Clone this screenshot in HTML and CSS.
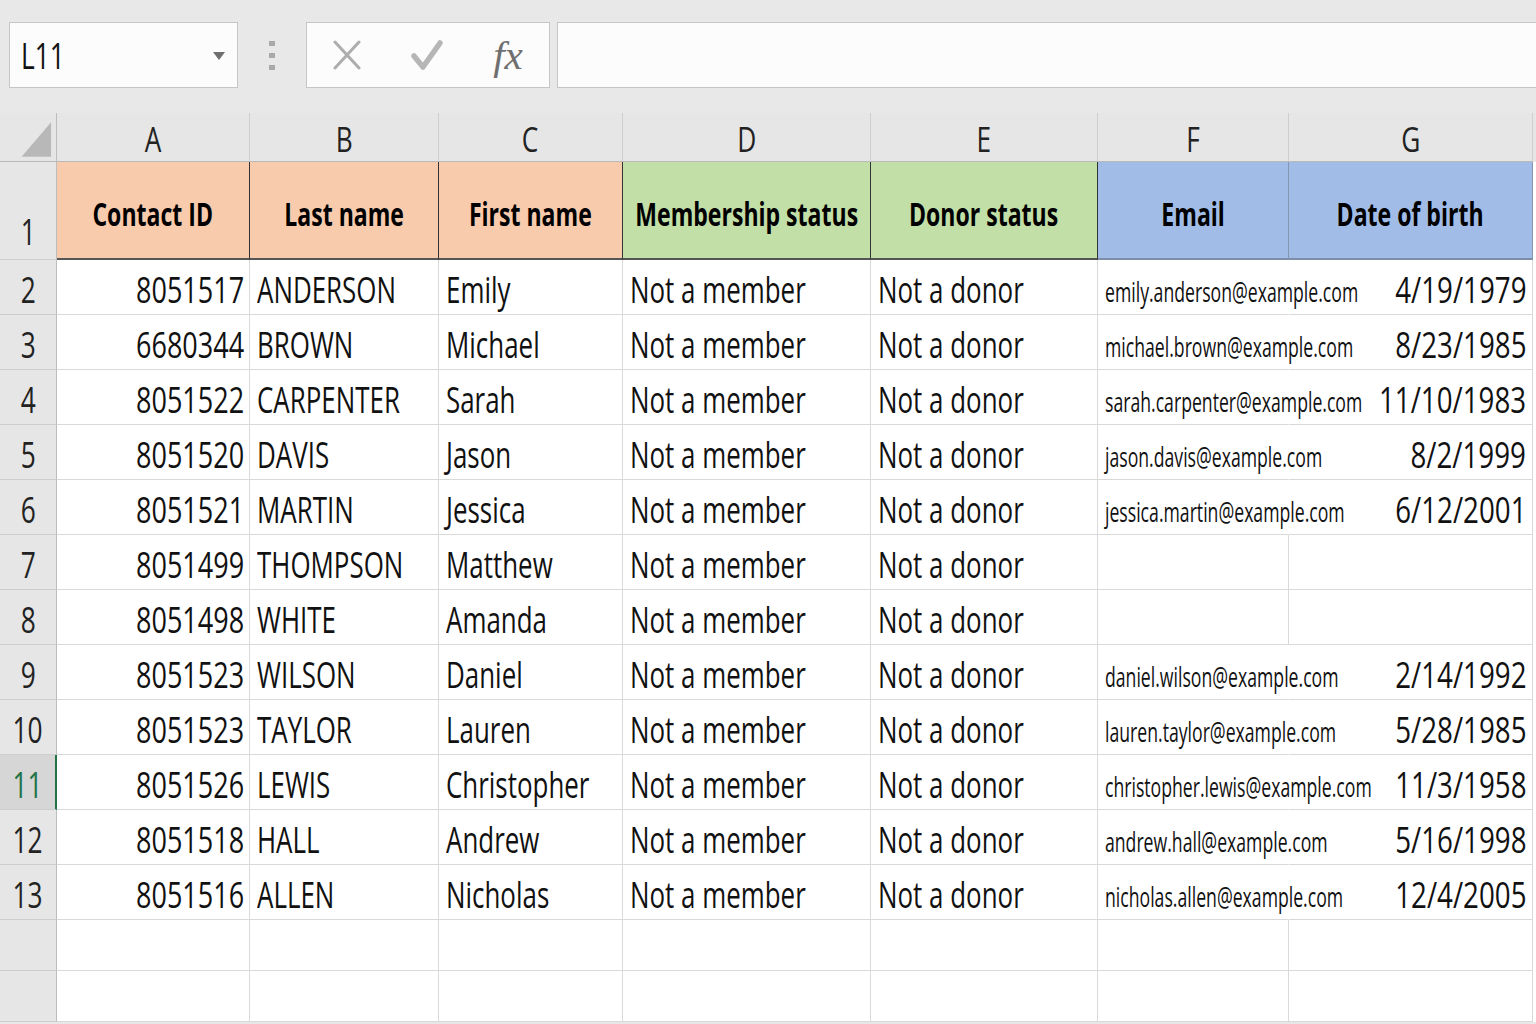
FILE: index.html
```html
<!DOCTYPE html>
<html>
<head>
    <meta charset="UTF-8">
    <title>Contacts</title>
    <link rel="stylesheet" href="styles.css">
</head>
<body>
<!-- formula bar -->
<div class="toolbar">
    <div class="namebox">
        <span class="t">L11</span>
        <span class="caret"></span>
    </div>
    <div class="grip"><i></i><i></i><i></i></div>
    <div class="fbuttons">
        <svg width="28" height="30" viewBox="0 0 28 30">
            <path d="M2 2 L26 28 M26 2 L2 28" stroke="#adadad" stroke-width="3" stroke-linecap="round" fill="none"/>
        </svg>
        <svg width="32" height="32" viewBox="0 0 32 32">
            <path d="M3 17 L12 28 L29 4" stroke="#b6b6b6" stroke-width="5.5" stroke-linecap="round" stroke-linejoin="round" fill="none"/>
        </svg>
        <span class="fx">fx</span>
    </div>
    <div class="formula"></div>
</div>

<!-- sheet -->
<div class="sheet">
    <div class="cell corner">
        <svg width="57" height="49" viewBox="0 0 57 49"><polygon points="22,44 52,44 52,9" fill="#b8b8b8"/></svg>
    </div>
    <div class="cell ch"><span class="t">A</span></div>
    <div class="cell ch"><span class="t">B</span></div>
    <div class="cell ch"><span class="t">C</span></div>
    <div class="cell ch"><span class="t">D</span></div>
    <div class="cell ch"><span class="t">E</span></div>
    <div class="cell ch"><span class="t">F</span></div>
    <div class="cell ch"><span class="t">G</span></div>

    <div class="cell rh first"><span class="t">1</span></div>
    <div class="cell hd o"><span class="t">Contact ID</span></div>
    <div class="cell hd o"><span class="t">Last name</span></div>
    <div class="cell hd o"><span class="t">First name</span></div>
    <div class="cell hd g"><span class="t">Membership status</span></div>
    <div class="cell hd g"><span class="t">Donor status</span></div>
    <div class="cell hd b"><span class="t">Email</span></div>
    <div class="cell hd b"><span class="t">Date of birth</span></div>

    <div class="cell rh"><span class="t">2</span></div>
    <div class="cell r num"><span class="t">8051517</span></div>
    <div class="cell l"><span class="t">ANDERSON</span></div>
    <div class="cell l"><span class="t">Emily</span></div>
    <div class="cell l"><span class="t">Not a member</span></div>
    <div class="cell l"><span class="t">Not a donor</span></div>
    <div class="cell l email nob"><span class="t">emily.anderson@example.com</span></div>
    <div class="cell r date"><span class="t">4/19/1979</span></div>

    <div class="cell rh"><span class="t">3</span></div>
    <div class="cell r num"><span class="t">6680344</span></div>
    <div class="cell l"><span class="t">BROWN</span></div>
    <div class="cell l"><span class="t">Michael</span></div>
    <div class="cell l"><span class="t">Not a member</span></div>
    <div class="cell l"><span class="t">Not a donor</span></div>
    <div class="cell l email nob"><span class="t">michael.brown@example.com</span></div>
    <div class="cell r date"><span class="t">8/23/1985</span></div>

    <div class="cell rh"><span class="t">4</span></div>
    <div class="cell r num"><span class="t">8051522</span></div>
    <div class="cell l"><span class="t">CARPENTER</span></div>
    <div class="cell l"><span class="t">Sarah</span></div>
    <div class="cell l"><span class="t">Not a member</span></div>
    <div class="cell l"><span class="t">Not a donor</span></div>
    <div class="cell l email nob"><span class="t">sarah.carpenter@example.com</span></div>
    <div class="cell r date"><span class="t">11/10/1983</span></div>

    <div class="cell rh"><span class="t">5</span></div>
    <div class="cell r num"><span class="t">8051520</span></div>
    <div class="cell l"><span class="t">DAVIS</span></div>
    <div class="cell l"><span class="t">Jason</span></div>
    <div class="cell l"><span class="t">Not a member</span></div>
    <div class="cell l"><span class="t">Not a donor</span></div>
    <div class="cell l email nob"><span class="t">jason.davis@example.com</span></div>
    <div class="cell r date"><span class="t">8/2/1999</span></div>

    <div class="cell rh"><span class="t">6</span></div>
    <div class="cell r num"><span class="t">8051521</span></div>
    <div class="cell l"><span class="t">MARTIN</span></div>
    <div class="cell l"><span class="t">Jessica</span></div>
    <div class="cell l"><span class="t">Not a member</span></div>
    <div class="cell l"><span class="t">Not a donor</span></div>
    <div class="cell l email nob"><span class="t">jessica.martin@example.com</span></div>
    <div class="cell r date"><span class="t">6/12/2001</span></div>

    <div class="cell rh"><span class="t">7</span></div>
    <div class="cell r num"><span class="t">8051499</span></div>
    <div class="cell l"><span class="t">THOMPSON</span></div>
    <div class="cell l"><span class="t">Matthew</span></div>
    <div class="cell l"><span class="t">Not a member</span></div>
    <div class="cell l"><span class="t">Not a donor</span></div>
    <div class="cell"></div>
    <div class="cell"></div>

    <div class="cell rh"><span class="t">8</span></div>
    <div class="cell r num"><span class="t">8051498</span></div>
    <div class="cell l"><span class="t">WHITE</span></div>
    <div class="cell l"><span class="t">Amanda</span></div>
    <div class="cell l"><span class="t">Not a member</span></div>
    <div class="cell l"><span class="t">Not a donor</span></div>
    <div class="cell"></div>
    <div class="cell"></div>

    <div class="cell rh"><span class="t">9</span></div>
    <div class="cell r num"><span class="t">8051523</span></div>
    <div class="cell l"><span class="t">WILSON</span></div>
    <div class="cell l"><span class="t">Daniel</span></div>
    <div class="cell l"><span class="t">Not a member</span></div>
    <div class="cell l"><span class="t">Not a donor</span></div>
    <div class="cell l email nob"><span class="t">daniel.wilson@example.com</span></div>
    <div class="cell r date"><span class="t">2/14/1992</span></div>

    <div class="cell rh"><span class="t">10</span></div>
    <div class="cell r num"><span class="t">8051523</span></div>
    <div class="cell l"><span class="t">TAYLOR</span></div>
    <div class="cell l"><span class="t">Lauren</span></div>
    <div class="cell l"><span class="t">Not a member</span></div>
    <div class="cell l"><span class="t">Not a donor</span></div>
    <div class="cell l email nob"><span class="t">lauren.taylor@example.com</span></div>
    <div class="cell r date"><span class="t">5/28/1985</span></div>

    <div class="cell rh sel"><span class="t">11</span></div>
    <div class="cell r num"><span class="t">8051526</span></div>
    <div class="cell l"><span class="t">LEWIS</span></div>
    <div class="cell l"><span class="t">Christopher</span></div>
    <div class="cell l"><span class="t">Not a member</span></div>
    <div class="cell l"><span class="t">Not a donor</span></div>
    <div class="cell l email nob"><span class="t">christopher.lewis@example.com</span></div>
    <div class="cell r date"><span class="t">11/3/1958</span></div>

    <div class="cell rh"><span class="t">12</span></div>
    <div class="cell r num"><span class="t">8051518</span></div>
    <div class="cell l"><span class="t">HALL</span></div>
    <div class="cell l"><span class="t">Andrew</span></div>
    <div class="cell l"><span class="t">Not a member</span></div>
    <div class="cell l"><span class="t">Not a donor</span></div>
    <div class="cell l email nob"><span class="t">andrew.hall@example.com</span></div>
    <div class="cell r date"><span class="t">5/16/1998</span></div>

    <div class="cell rh"><span class="t">13</span></div>
    <div class="cell r num"><span class="t">8051516</span></div>
    <div class="cell l"><span class="t">ALLEN</span></div>
    <div class="cell l"><span class="t">Nicholas</span></div>
    <div class="cell l"><span class="t">Not a member</span></div>
    <div class="cell l"><span class="t">Not a donor</span></div>
    <div class="cell l email nob"><span class="t">nicholas.allen@example.com</span></div>
    <div class="cell r date"><span class="t">12/4/2005</span></div>

    <div class="cell rh"></div>
    <div class="cell"></div>
    <div class="cell"></div>
    <div class="cell"></div>
    <div class="cell"></div>
    <div class="cell"></div>
    <div class="cell"></div>
    <div class="cell"></div>

    <div class="cell rh"></div>
    <div class="cell"></div>
    <div class="cell"></div>
    <div class="cell"></div>
    <div class="cell"></div>
    <div class="cell"></div>
    <div class="cell"></div>
    <div class="cell"></div>
</div>
</body>
</html>
```

FILE: styles.css
```css
/* page */
body {
    margin: 0;
    background: #e8e8e8;
    font-family: "Open Sans", "Noto Sans", sans-serif;
    color: #111;
    overflow: hidden;
}

/* narrow text, the sheet font is condensed */
.t {
    display: inline-block;
    flex: none;
    line-height: 1;
    transform: scaleX(0.72);
    transform-origin: left center;
}

/* formula bar */
.toolbar {
    height: 113px;
    box-sizing: border-box;
    padding: 22px 0 0 9px;
    display: flex;
    align-items: flex-start;
}
.namebox {
    width: 229px;
    height: 66px;
    box-sizing: border-box;
    background: #fcfcfc;
    border: 1px solid #c6c6c6;
    display: flex;
    align-items: center;
    padding-left: 11px;
    padding-top: 2px;
}
.namebox .t {
    font-size: 36px;
    transform: scaleX(0.73);
}
.caret {
    margin-left: auto;
    margin-right: 12px;
    width: 0;
    height: 0;
    border-left: 6.5px solid transparent;
    border-right: 6.5px solid transparent;
    border-top: 8px solid #6e6e6e;
}
.grip {
    width: 68px;
    height: 66px;
    display: flex;
    flex-direction: column;
    align-items: center;
    justify-content: center;
    gap: 7px;
}
.grip i {
    width: 6px;
    height: 5px;
    background: #a9a9a9;
}
.fbuttons {
    width: 244px;
    height: 66px;
    box-sizing: border-box;
    background: #fcfcfc;
    border: 1px solid #c6c6c6;
    display: grid;
    grid-template-columns: 80px 80px 82px;
    align-items: center;
    justify-items: center;
}
.fx {
    font-family: "Liberation Serif", "DejaVu Serif", serif;
    font-style: italic;
    font-size: 41px;
    line-height: 1;
    color: #6f6f6f;
}
.formula {
    flex: 1;
    margin-left: 7px;
    height: 66px;
    box-sizing: border-box;
    background: #fcfcfc;
    border: 1px solid #c6c6c6;
    border-right: none;
}

/* sheet grid */
.sheet {
    display: grid;
    grid-template-columns: 57px 193px 189px 184px 248px 227px 191px 244px;
    grid-template-rows: 49px 98px repeat(12, 55px) 51px 51px;
    background: linear-gradient(#e6e6e6 49px, #fff 49px);
}
.cell {
    box-sizing: border-box;
    min-width: 0;
    display: flex;
    align-items: center;
    padding-top: 5px;
    white-space: nowrap;
    background: #fff;
    border-right: 1px solid #d9d9d9;
    border-bottom: 1px solid #d9d9d9;
    font-size: 36px;
}
.l {
    padding-left: 7px;
}
.r {
    justify-content: flex-end;
    padding-right: 5px;
}
.r .t {
    transform-origin: right center;
}
.num .t {
    transform: scaleX(0.75);
}
.date {
    padding-right: 6px;
}
.date .t {
    transform: scaleX(0.77);
}
.email {
    padding-top: 8px;
}
.email .t {
    font-size: 28px;
    transform: scaleX(0.63);
}
.nob {
    border-right-color: #fff;
}

/* headings */
.corner {
    padding-top: 0;
    background: #e6e6e6;
    border-right: 1px solid #bdbdbd;
    border-bottom: 1px solid #b9b9b9;
}
.ch {
    background: #e6e6e6;
    justify-content: center;
    padding-top: 3px;
    font-size: 35px;
    color: #222;
    border-right: 1px solid #cfcfcf;
    border-bottom: 1px solid #b9b9b9;
}
.ch .t {
    transform: scaleX(0.75);
    transform-origin: center;
}
.rh {
    background: #e6e6e6;
    justify-content: center;
    color: #222;
    border-right: 1px solid #bdbdbd;
    border-bottom: 1px solid #cdcdcd;
}
.rh .t {
    transform: scaleX(0.73);
    transform-origin: center;
}
.rh.first {
    align-items: flex-end;
    padding-bottom: 9px;
}
.rh.sel {
    background: #d6d6d6;
    color: #217346;
    border-right: 2px solid #217346;
}

/* row 1 titles */
.hd {
    justify-content: center;
    padding-top: 8px;
    font-size: 32px;
    font-weight: bold;
    color: #000;
    border-right: 1px solid #333;
    border-bottom: 2px solid #555;
}
.hd .t {
    transform-origin: center;
}
.o {
    background: #f8cbad;
}
.g {
    background: #c2dfa7;
}
.b {
    background: #a1bde7;
    border-right-color: #8596b0;
    border-bottom-color: #7e8ea8;
}
```
